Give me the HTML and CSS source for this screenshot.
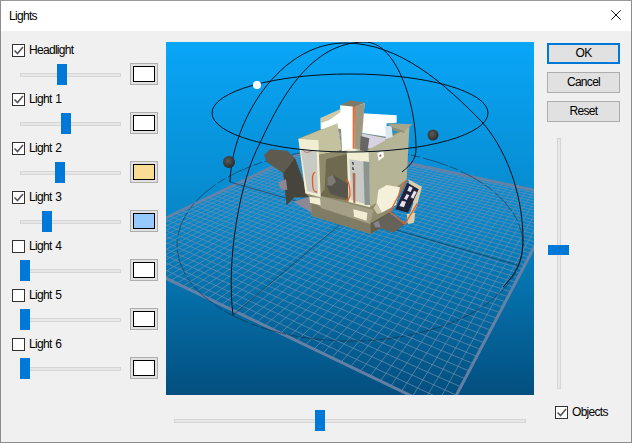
FILE: index.html
```html
<!DOCTYPE html>
<html lang="en">
<head>
<meta charset="utf-8">
<title>Lights</title>
<link rel="stylesheet" href="styles.css">
</head>
<body>
<div class="dialog">
  <header class="titlebar">
    <span class="title">Lights</span>
    <svg class="close" width="10" height="10" viewBox="0 0 10 10"><path d="M.3.3l9.4 9.4M9.7.3L.3 9.7" stroke="#111" stroke-width="1" fill="none"/></svg>
  </header>
  <div class="main">
    <section class="lights">
      <div class="light">
        <label class="check"><span class="box"><svg width="13" height="13" viewBox="0 0 13 13"><path d="M2.5 6.5l3 3 5.5-6.5" class="tick"/></svg></span>Headlight</label>
        <div class="light-controls">
          <div class="slider"><div class="track"></div><div class="thumb" style="left:37px"></div></div>
          <div class="swatch"><div class="swatch-fill"></div></div>
        </div>
      </div>
      <div class="light">
        <label class="check"><span class="box"><svg width="13" height="13" viewBox="0 0 13 13"><path d="M2.5 6.5l3 3 5.5-6.5" class="tick"/></svg></span>Light 1</label>
        <div class="light-controls">
          <div class="slider"><div class="track"></div><div class="thumb" style="left:41px"></div></div>
          <div class="swatch"><div class="swatch-fill"></div></div>
        </div>
      </div>
      <div class="light">
        <label class="check"><span class="box"><svg width="13" height="13" viewBox="0 0 13 13"><path d="M2.5 6.5l3 3 5.5-6.5" class="tick"/></svg></span>Light 2</label>
        <div class="light-controls">
          <div class="slider"><div class="track"></div><div class="thumb" style="left:35px"></div></div>
          <div class="swatch"><div class="swatch-fill" style="background:#fbdc95"></div></div>
        </div>
      </div>
      <div class="light">
        <label class="check"><span class="box"><svg width="13" height="13" viewBox="0 0 13 13"><path d="M2.5 6.5l3 3 5.5-6.5" class="tick"/></svg></span>Light 3</label>
        <div class="light-controls">
          <div class="slider"><div class="track"></div><div class="thumb" style="left:22px"></div></div>
          <div class="swatch"><div class="swatch-fill" style="background:#95c9ff"></div></div>
        </div>
      </div>
      <div class="light">
        <label class="check"><span class="box"></span>Light 4</label>
        <div class="light-controls">
          <div class="slider"><div class="track"></div><div class="thumb" style="left:0"></div></div>
          <div class="swatch"><div class="swatch-fill"></div></div>
        </div>
      </div>
      <div class="light">
        <label class="check"><span class="box"></span>Light 5</label>
        <div class="light-controls">
          <div class="slider"><div class="track"></div><div class="thumb" style="left:0"></div></div>
          <div class="swatch"><div class="swatch-fill"></div></div>
        </div>
      </div>
      <div class="light">
        <label class="check"><span class="box"></span>Light 6</label>
        <div class="light-controls">
          <div class="slider"><div class="track"></div><div class="thumb" style="left:0"></div></div>
          <div class="swatch"><div class="swatch-fill"></div></div>
        </div>
      </div>
    </section>

    <section class="center">
      <svg class="scene" width="368" height="353" viewBox="166 42 368 353">
        <defs>
          <linearGradient id="sky" x1="0" y1="0" x2="0" y2="1">
            <stop offset="0" stop-color="#09a6f8"/>
            <stop offset=".5" stop-color="#0787c8"/>
            <stop offset="1" stop-color="#034f7f"/>
          </linearGradient>
          <radialGradient id="ball" cx=".42" cy=".4" r=".6">
            <stop offset="0" stop-color="#5a5a5a"/>
            <stop offset="1" stop-color="#2c2c2c"/>
          </radialGradient>
        </defs>
        <rect x="166" y="42" width="368" height="353" fill="url(#sky)"/>
        <g id="floor"></g>
        <g class="floor-lines">
          <ellipse cx="350" cy="245" rx="173" ry="96" stroke-dasharray="26 2 9 3"/>
          <path d="M230 182L517 265M233 315L402 172"/>
        </g>

        <g transform="translate(250 90) scale(.33333)">
          <!-- chip conveyor -->
          <path fill="#5f5a50" d="M42 195L60 178 112 182 135 205 178 322 132 322 110 346 100 250 50 216Z"/>
          <path fill="#47443b" d="M100 250L135 205 178 322 132 322 110 346Z"/>
          <path fill="#8e8894" d="M85 277L108 268 112 300 92 298Z"/>
          <path fill="#8e8894" d="M130 335L178 320 235 345 185 368Z"/>
          <!-- solid body behind every panel -->
          <path fill="#8f8a6c" d="M145 146L212 118 270 100 330 130 408 140 478 110 470 268 420 366 425 395 362 432 185 378 178 322 166 310Z"/>
          <!-- base -->
          <path fill="#7f7b64" d="M185 340L366 398 362 432 185 378Z"/>
          <path fill="#625e4b" d="M362 400L420 366 425 395 362 432Z"/>
          <path fill="#a3a087" d="M178 320L210 318 370 360 360 402 215 355Z"/>
          <path fill="#f1eed4" d="M178 320L210 325 212 346 180 338Z"/>
          <path fill="#f1eed4" d="M310 358L352 368 350 392 312 380Z"/>
          <!-- back walls -->
          <path fill="#fff" d="M212 85L258 65 440 76 440 98 410 100 408 140 340 130 260 115 212 118Z"/>
          <path fill="#cdc9a8" d="M212 84L270 58 272 66 238 90 212 100Z"/>
          <path fill="#d8d3e2" d="M330 130L410 145 385 180 330 170Z"/>
          <path fill="#7f8a90" d="M242 112L275 120 278 185 245 170Z"/>
          <path fill="#a39b9b" d="M245 120L275 130 275 140 248 132ZM248 142L275 150 275 160 250 152Z"/>
          <!-- right wall -->
          <path fill="#b6b496" d="M350 182L478 110 470 268 380 338 360 350Z"/>
          <path fill="#d8e8ee" d="M405 108L425 108 428 140 408 148Z"/>
          <path fill="#a8a48a" d="M410 100L488 103 462 124 425 112Z"/>
          <path fill="#928e76" d="M425 112L462 124 466 128 430 122Z"/>
          <!-- left wall -->
          <path fill="#c4c29e" d="M146 146L262 100 275 180 205 195 203 150Z"/>
          <!-- interior -->
          <path fill="#6f6a4f" d="M205 196L290 178 296 332 212 318Z"/>
          <path fill="#8f8a6c" d="M205 196L290 178 290 192 228 208 224 298 210 315Z"/>
          <path fill="#57544d" d="M232 262L248 254 295 282 292 326 242 312 232 290Z"/>
          <path fill="#7e7b74" d="M232 262L248 254 258 275 244 288 232 285Z"/>
          <!-- column -->
          <path fill="#fff" d="M270 46L344 40 331 178 276 183Z"/>
          <path fill="#f3662c" d="M308 48L315 48 314 176 308 176Z"/>
          <path fill="#9c987f" d="M315 48L344 40 333 178 314 176Z"/>
          <path fill="#7e7a68" d="M270 46L300 31 345 38 313 50Z"/>
          <path fill="#666" d="M332 138L358 145 352 185 330 180Z"/>
          <!-- doors -->
          <path fill="#f1eed4" d="M145 146L205 150 212 322 166 310Z"/>
          <path fill="#c8cac6" d="M152 178L200 183 204 312 172 304Z"/>
          <path fill="none" stroke="#e85a22" stroke-width="4" d="M196 246C186 250 187 262 188 285C188 298 194 306 201 306"/>
          <path fill="none" stroke="#a0503c" stroke-width="2" d="M160 180C168 194 178 184 188 182"/>
          <path fill="#f1eed4" d="M290 176L356 186 360 352 296 336Z"/>
          <path fill="#c8cac6" d="M298 208L350 216 354 345 304 330Z"/>
          <path fill="#b06a50" d="M308 248L316 250 316 340 310 338Z"/>
          <path fill="#8c9490" d="M340 214L358 216 360 345 344 345Z"/>
          <path fill="none" stroke="#e85a22" stroke-width="4" d="M290 268C300 280 300 300 300 315C299 325 296 330 288 332"/>
          <path fill="#33333a" d="M306 216l4 0 2 8-4 0ZM306 232l4 0 2 8-4 0Z"/>
          <path fill="#fff" d="M382 190L400 182 402 200 386 212Z"/>
          <path fill="#c0392b" d="M388 196l5-3 1 5-5 3Z"/>
          <!-- side box -->
          <path fill="#f4f0da" d="M385 300L410 285 450 292 438 345 395 368 380 340Z"/>
          <path fill="#c9c6a8" d="M380 340L395 368 382 372 370 355Z"/>
          <!-- console -->
          <path fill="#66625a" d="M372 400L418 372 466 402 430 428 388 414Z"/>
          <path fill="#8a8490" d="M370 400L385 392 392 412 376 412Z"/>
          <path fill="#d8cfae" d="M475 268L516 290 500 350 470 402 490 340Z"/>
          <path fill="#d8cfae" d="M470 372L496 368 492 398 474 402Z"/>
          <path fill="#23233a" d="M472 278L506 298 474 368 436 358Z"/>
          <path fill="#e6e1ee" d="M478 288L488 293 482 306 472 302ZM492 302L500 306 490 326 482 322ZM470 312L478 316 470 330 462 326ZM456 332L468 335 462 352 448 348Z"/>
          <path fill="none" stroke="#ee5f25" stroke-width="4" d="M470 270L420 366 465 402 502 340"/>
        </g>

        <g class="sphere">
          <ellipse cx="350" cy="113" rx="138" ry="39"/>
          <path d="M230 182C232 120 280 43 345 43C400 43 445 84 483 123C510 155 523 200 523 240C523 262 515 275 503 287"/>
          <path d="M233 315C226 260 240 180 260 143C280 100 310 42 365 42C395 42 416 100 416 149C416 158 412 164 402 172"/>
        </g>
        <circle cx="229" cy="162" r="6" fill="url(#ball)"/>
        <circle cx="433" cy="135" r="5.5" fill="url(#ball)"/>
        <circle cx="257" cy="85" r="4" fill="#fff"/>
      </svg>
      <div class="slider slider-bottom"><div class="track"></div><div class="thumb" style="left:141px"></div></div>
    </section>

    <aside class="side">
      <button class="btn btn-default">OK</button>
      <button class="btn">Cancel</button>
      <button class="btn">Reset</button>
      <div class="vslider"><div class="vtrack"></div><div class="vthumb" style="top:107px"></div></div>
      <label class="check check-objects"><span class="box"><svg width="13" height="13" viewBox="0 0 13 13"><path d="M2.5 6.5l3 3 5.5-6.5" class="tick"/></svg></span>Objects</label>
    </aside>
  </div>
</div>
<script src="grid.js"></script>
</body>
</html>
```
FILE: styles.css
```css
* { box-sizing: border-box; }
html, body { margin: 0; padding: 0; }
body { width: 632px; height: 443px; overflow: hidden; font: 12px "Liberation Sans", Arial, sans-serif; letter-spacing: -.7px; word-spacing: 1px; color: #000; }
.dialog { width: 632px; height: 443px; border: 1px solid #8c8c8c; border-top-color: #9a9a9a; background: #f0f0f0; display: flex; flex-direction: column; }
.titlebar { height: 30px; flex: none; background: #fff; display: flex; align-items: center; justify-content: space-between; padding: 0 10px 0 8px; }
.title { font-size: 12px; }
.close { display: block; margin-top: -2px; }
.main { display: flex; flex: 1; min-height: 0; }

.lights { width: 165px; flex: none; padding: 11px 0 0 11px; display: flex; flex-direction: column; }
.light { height: 49px; flex: none; }
.check { display: flex; align-items: center; gap: 4px; height: 16px; line-height: 16px; }
.box { width: 13px; height: 13px; flex: none; border: 1px solid #333; background: #fff; position: relative; }
.box svg { position: absolute; left: -1px; top: -1px; display: block; }
.tick { fill: none; stroke: #555; stroke-width: 1.6; }
.light-controls { display: flex; margin: 5px 0 0 8px; gap: 9px; }

.slider { position: relative; width: 101px; height: 22px; padding-top: 10px; flex: none; }
.track { height: 4px; background: #e7e7e7; border: 1px solid #d6d6d6; }
.thumb { position: absolute; top: 1px; width: 10px; height: 21px; background: #0078d7; }
.slider-bottom { width: 352px; margin: 14px 0 0 8px; }

.swatch { width: 28px; height: 22px; flex: none; border: 1px solid #adadad; background: #e1e1e1; padding: 2px; }
.swatch-fill { height: 16px; border: 1px solid #000; background: #fff; }

.center { width: 368px; flex: none; padding-top: 11px; display: flex; flex-direction: column; }
.scene { display: block; flex: none; }
.floor-lines { fill: none; stroke: #1c2430; stroke-width: .9; stroke-opacity: .6; }
.sphere { fill: none; stroke: #04101c; stroke-width: 1; }

.side { margin-left: 13px; width: 73px; flex: none; padding-top: 12px; display: flex; flex-direction: column; }
.btn { height: 21px; margin: 0 0 8px; padding: 0 0 1px; flex: none; border: 1px solid #adadad; background: #e1e1e1; font: inherit; letter-spacing: inherit; color: #000; }
.btn-default { border: 2px solid #0078d7; }
.vslider { position: relative; margin: 8px 0 0 1px; width: 21px; height: 251px; flex: none; }
.vtrack { position: absolute; left: 9px; top: 0; bottom: 0; width: 4px; background: #e7e7e7; border: 1px solid #d6d6d6; }
.vthumb { position: absolute; left: 0; width: 21px; height: 10px; background: #0078d7; }
.check-objects { margin: 15px 0 0 8px; }
```
FILE: grid.js
```js
(function () {
  var NS = 'http://www.w3.org/2000/svg';
  var g = document.getElementById('floor');
  // plane corners on screen: back, right, front, left
  var P = [[320, 144], [561, 196], [447, 413], [103, 248]];
  var N = 46;

  function homography(p) {
    var x0 = p[0][0], y0 = p[0][1], x1 = p[1][0], y1 = p[1][1];
    var x2 = p[2][0], y2 = p[2][1], x3 = p[3][0], y3 = p[3][1];
    var dx1 = x1 - x2, dx2 = x3 - x2, sx = x0 - x1 + x2 - x3;
    var dy1 = y1 - y2, dy2 = y3 - y2, sy = y0 - y1 + y2 - y3;
    var d = dx1 * dy2 - dx2 * dy1;
    var a13 = (sx * dy2 - dx2 * sy) / d, a23 = (dx1 * sy - sx * dy1) / d;
    return function (u, v) {
      var w = a13 * u + a23 * v + 1;
      return [(x1 - x0 + a13 * x1) * u + (x3 - x0 + a23 * x3) * v + x0,
              (y1 - y0 + a13 * y1) * u + (y3 - y0 + a23 * y3) * v + y0].map(function (c) { return c / w; });
    };
  }
  var H = homography(P);

  function line(a, b, w, color) {
    var l = document.createElementNS(NS, 'line');
    l.setAttribute('x1', a[0]); l.setAttribute('y1', a[1]);
    l.setAttribute('x2', b[0]); l.setAttribute('y2', b[1]);
    l.setAttribute('stroke', color); l.setAttribute('stroke-width', w);
    g.appendChild(l);
  }

  var fine = 'rgba(110,140,175,.72)', edge = 'rgba(105,130,165,.95)';
  for (var i = 0; i <= N; i++) {
    var t = i / N, e = i === 0 || i === N;
    line(H(t, 0), H(t, 1), e ? 3 : 1, e ? edge : fine);
    line(H(0, t), H(1, t), e ? 3 : 1, e ? edge : fine);
  }
})();
```
